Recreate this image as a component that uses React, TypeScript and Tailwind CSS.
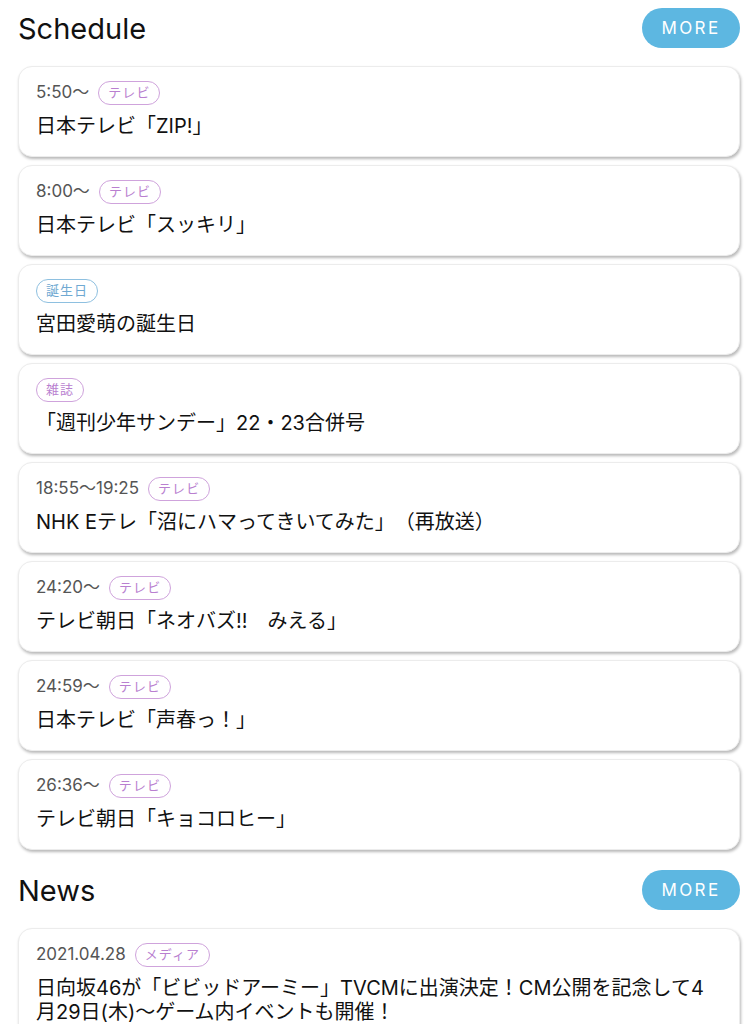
import React from 'react';

type Item = {
  time?: string;
  date?: string;
  tag: string;
  tone: 'purple' | 'blue';
  title: string;
};

const schedule: Item[] = [
  { time: '5:50〜', tag: 'テレビ', tone: 'purple', title: '日本テレビ「ZIP!」' },
  { time: '8:00〜', tag: 'テレビ', tone: 'purple', title: '日本テレビ「スッキリ」' },
  { tag: '誕生日', tone: 'blue', title: '宮田愛萌の誕生日' },
  { tag: '雑誌', tone: 'purple', title: '「週刊少年サンデー」22・23合併号' },
  { time: '18:55〜19:25', tag: 'テレビ', tone: 'purple', title: 'NHK Eテレ「沼にハマってきいてみた」（再放送）' },
  { time: '24:20〜', tag: 'テレビ', tone: 'purple', title: 'テレビ朝日「ネオバズ!!　みえる」' },
  { time: '24:59〜', tag: 'テレビ', tone: 'purple', title: '日本テレビ「声春っ！」' },
  { time: '26:36〜', tag: 'テレビ', tone: 'purple', title: 'テレビ朝日「キョコロヒー」' },
];

const news: Item[] = [
  {
    date: '2021.04.28',
    tag: 'メディア',
    tone: 'purple',
    title: '日向坂46が「ビビッドアーミー」TVCMに出演決定！CM公開を記念して4月29日(木)〜ゲーム内イベントも開催！',
  },
];

const font = { fontFamily: 'Inter, "Noto Sans CJK JP", sans-serif' };

const Tag: React.FC<{ label: string; tone: 'purple' | 'blue' }> = ({ label, tone }) => (
  <span
    className={
      tone === 'blue'
        ? 'inline-flex h-6 items-center rounded-full border border-[#8ec0e0] px-[9px] text-[13px] tracking-[0.08em] text-[#6fa9d2]'
        : 'inline-flex h-6 items-center rounded-full border border-[#cfa3dc] px-[9px] text-[13px] tracking-[0.08em] text-[#b97fd0]'
    }
  >
    {label}
  </span>
);

const Card: React.FC<{ item: Item }> = ({ item }) => (
  <div className="rounded-[14px] border border-[#ececec] bg-white pl-[17px] pr-[17px] pt-[14px] pb-[18px] shadow-[1px_2px_3px_rgba(0,0,0,0.28)]">
    <div className="flex h-6 items-center gap-[9px]">
      {(item.time || item.date) && (
        <span className="text-[17px] text-[#555] [text-spacing-trim:space-all]">{item.time || item.date}</span>
      )}
      <Tag label={item.tag} tone={item.tone} />
    </div>
    <p className="mt-[9px] text-[20px] leading-[24px] text-[#111] [text-spacing-trim:space-all]">{item.title}</p>
  </div>
);

const Section: React.FC<{ title: string; items: Item[] }> = ({ title, items }) => (
  <section className="pl-[18px] pr-[15px]">
    <div className="flex h-[57px] items-center justify-between pb-[1px]">
      <h2 className="text-[29px] leading-none text-[#111]">{title}</h2>
      <button className="flex h-10 w-[98px] items-center justify-center rounded-full bg-[#5db7e1] pt-[2px] text-[17px] tracking-[0.14em] text-white">
        MORE
      </button>
    </div>
    <div className="mt-[9px] flex flex-col gap-2">
      {items.map((it, i) => (
        <Card key={i} item={it} />
      ))}
    </div>
  </section>
);

export default function App() {
  return (
    <div className="min-h-screen bg-white" style={font}>
      <Section title="Schedule" items={schedule} />
      <div className="h-[12px]" />
      <Section title="News" items={news} />
    </div>
  );
}
